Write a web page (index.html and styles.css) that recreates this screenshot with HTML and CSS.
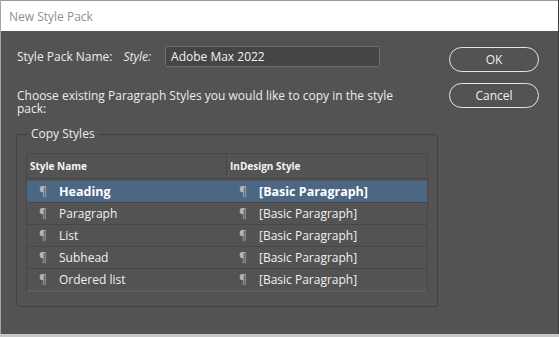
FILE: index.html
```html
<!DOCTYPE html>
<html>
<head>
<meta charset="utf-8">
<link rel="stylesheet" href="styles.css">
</head>
<body>
<div class="window">
  <div class="titlebar">New Style Pack</div>
  <div class="content">
    <div class="main">
      <div class="name-row">
        <span class="label">Style Pack Name:</span>
        <span class="label italic">Style:</span>
        <div class="input">Adobe Max 2022</div>
      </div>
      <p class="intro">Choose existing Paragraph Styles you would like to copy in the style<br>pack:</p>
      <fieldset class="group">
        <legend>Copy Styles</legend>
        <div class="table">
          <div class="thead">
            <div class="th c1">Style Name</div>
            <div class="th c2">InDesign Style</div>
          </div>
          <div class="row selected">
            <div class="cell c1"><span class="pil">¶</span>Heading</div>
            <div class="cell c2"><span class="pil">¶</span>[Basic Paragraph]</div>
          </div>
          <div class="row">
            <div class="cell c1"><span class="pil">¶</span>Paragraph</div>
            <div class="cell c2"><span class="pil">¶</span>[Basic Paragraph]</div>
          </div>
          <div class="row">
            <div class="cell c1"><span class="pil">¶</span>List</div>
            <div class="cell c2"><span class="pil">¶</span>[Basic Paragraph]</div>
          </div>
          <div class="row">
            <div class="cell c1"><span class="pil">¶</span>Subhead</div>
            <div class="cell c2"><span class="pil">¶</span>[Basic Paragraph]</div>
          </div>
          <div class="row last">
            <div class="cell c1"><span class="pil">¶</span>Ordered list</div>
            <div class="cell c2"><span class="pil">¶</span>[Basic Paragraph]</div>
          </div>
        </div>
      </fieldset>
    </div>
    <div class="buttons">
      <button class="btn">OK</button>
      <button class="btn">Cancel</button>
    </div>
  </div>
</div>
</body>
</html>
```
FILE: styles.css
```css
* { box-sizing: border-box; }
html, body { margin: 0; padding: 0; background: #c8c8c8; }
body { font-family: "Open Sans", "Noto Sans", sans-serif; }
.window {
  width: 559px;
  height: 334px;
  background: #535353;
  border-left: 1px solid #a3a3a3;
  border-right: 1px solid #3c3c3c;
  display: flex;
  flex-direction: column;
}
.titlebar {
  height: 31px;
  background: #ffffff;
  color: #8e8e98;
  font-size: 12px;
  line-height: 31px;
  padding-left: 8px;
  border-top: 1px solid #9a9a9a;
}
.content {
  display: flex;
  flex: 1;
  padding: 15px 0 0 15px;
}
.main { width: 422px; }
.name-row {
  display: flex;
  align-items: center;
  height: 21px;
  padding-left: 1px;
}
.label { color: #ececec; font-size: 12px; }
.italic { font-style: italic; margin-left: 11px; }
.input {
  margin-left: 14px;
  width: 215px;
  height: 21px;
  background: #454545;
  border: 1px solid #6c6c6c;
  border-radius: 2px;
  color: #f2f2f2;
  font-size: 12px;
  line-height: 19px;
  padding-left: 5px;
}
.intro {
  margin: 22px 0 0 1px;
  color: #ececec;
  font-size: 12px;
  line-height: 13px;
}
.group {
  margin: 12px 0 0 0;
  padding: 12px 9px 14px 9px;
  border: 1px solid #404040;
  border-radius: 3px;
  width: 422px;
}
.group legend {
  color: #ececec;
  font-size: 12px;
  padding: 0 3px;
  margin-left: 2px;
  line-height: 14px;
}
.table {
  border: 1px solid #484848;
  border-bottom: none;
}
.thead {
  display: flex;
  height: 25px;
  border-bottom: 1px solid #474747;
  margin-bottom: 2px;
}
.th {
  color: #f4f4f4;
  font-size: 10px;
  font-weight: bold;
  line-height: 24px;
  padding-left: 3px;
}
.thead .c1 { border-right: 1px solid #474747; }
.c1 { width: 200px; flex: none; }
.c2 { flex: 1; }
.row {
  display: flex;
  height: 22px;
  border-bottom: 1px solid #474747;
}
.row.last { border-bottom: 2px solid #5c5c5c; height: 23px; }
.row.selected { background: #4b6784; }
.cell {
  color: #f0f0f0;
  font-size: 12px;
  line-height: 21px;
  padding-left: 12px;
  white-space: nowrap;
}
.cell .pil {
  color: #b5b5b5;
  display: inline-block;
  width: 20px;
}
.selected .cell { font-weight: bold; font-size: 12.5px; color: #ffffff; }
.selected .cell .pil { font-weight: normal; }
.buttons {
  display: flex;
  flex-direction: column;
  gap: 11px;
  margin-left: 11px;
  padding-top: 1px;
}
.btn {
  width: 90px;
  height: 25px;
  border: 1px solid #e4e4e4;
  border-radius: 13px;
  background: transparent;
  color: #f0f0f0;
  font-family: "Open Sans", "Noto Sans", sans-serif;
  font-size: 12px;
  padding: 0;
}
```
